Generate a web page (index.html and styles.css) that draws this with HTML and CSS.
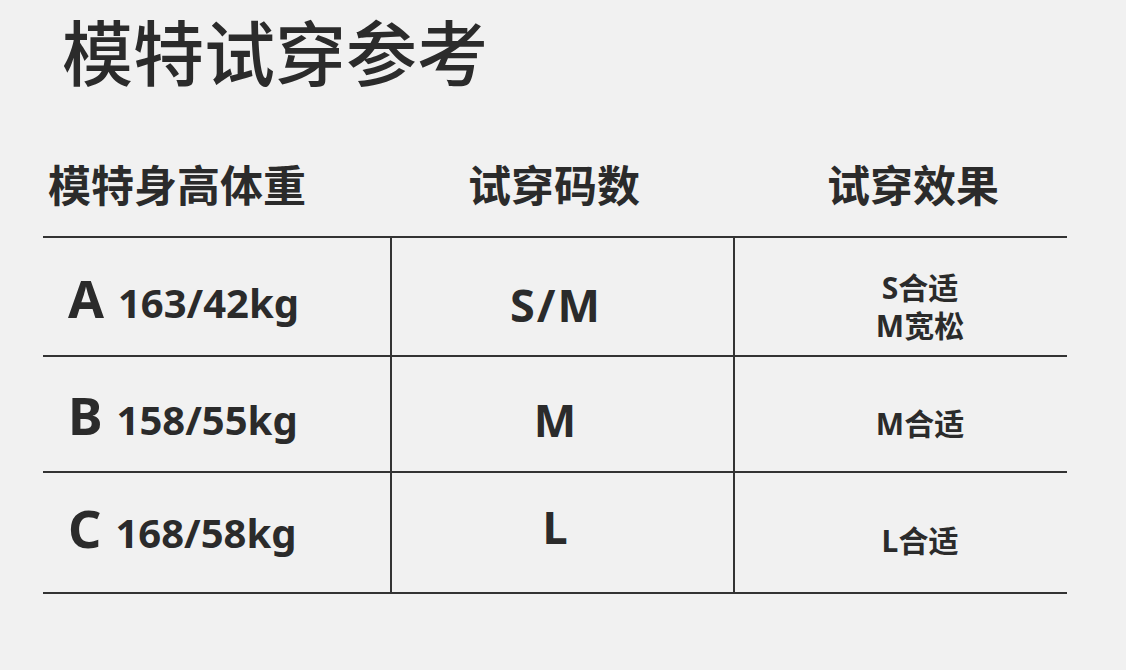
FILE: index.html
```html
<!DOCTYPE html>
<html lang="zh">
<head>
<meta charset="utf-8">
<title>模特试穿参考</title>
<link rel="stylesheet" href="styles.css">
</head>
<body>
<div class="page">
  <h1 class="title">模特试穿参考</h1>
  <div class="head">
    <div class="hcell h1">模特身高体重</div>
    <div class="hcell h2">试穿码数</div>
    <div class="hcell h3">试穿效果</div>
  </div>
  <div class="table">
    <div class="row r1">
      <div class="cell model"><span class="letter">A</span><span class="num">163/42kg</span></div>
      <div class="cell size">S/M</div>
      <div class="cell effect"><span>S合适</span><span>M宽松</span></div>
    </div>
    <div class="row r2">
      <div class="cell model"><span class="letter">B</span><span class="num">158/55kg</span></div>
      <div class="cell size">M</div>
      <div class="cell effect"><span>M合适</span></div>
    </div>
    <div class="row r3">
      <div class="cell model"><span class="letter">C</span><span class="num">168/58kg</span></div>
      <div class="cell size">L</div>
      <div class="cell effect"><span>L合适</span></div>
    </div>
  </div>
</div>
</body>
</html>
```

FILE: styles.css
```css
html, body {
  margin: 0;
  padding: 0;
  background: #f1f1f1;
}
body {
  width: 1126px;
  height: 670px;
  overflow: hidden;
  color: #2b2b2b;
  font-family: "Noto Sans", "Noto Sans CJK SC", sans-serif;
}
.page {
  padding: 0 59px 0 43px;
}
.title {
  margin: 14px 0 0 19px;
  font-family: "Noto Sans CJK SC", sans-serif;
  font-size: 71px;
  line-height: 1;
  font-weight: 500;
}
.head {
  display: grid;
  grid-template-columns: 347px 343px 334px;
  margin-top: 77px;
  height: 74px;
}
.hcell {
  font-family: "Noto Sans CJK SC", sans-serif;
  font-size: 43px;
  line-height: 1;
  font-weight: 700;
}
.h1 { padding-left: 5px; }
.h2 { text-align: center; padding-right: 15px; }
.h3 { text-align: center; padding-left: 26px; }

.table {
  border-top: 2px solid #333;
}
.row {
  display: grid;
  grid-template-columns: 347px 343px 334px;
  border-bottom: 2px solid #333;
}
.r1 { height: 117px; }
.r2 { height: 114px; }
.r3 { height: 119px; }
.cell {
  display: flex;
  font-weight: 700;
}
.cell + .cell {
  border-left: 2px solid #333;
}
.model {
  padding-left: 25px;
  align-items: baseline;
}
.letter {
  font-size: 52px;
  line-height: 1;
  margin-right: 14px;
}
.num {
  font-size: 40px;
  line-height: 1;
}
.r1 .model { padding-top: 34px; }
.r2 .model { padding-top: 32px; }
.r3 .model { padding-top: 29px; }
.size {
  justify-content: center;
  align-items: flex-start;
  padding-right: 13px;
  font-size: 45px;
  letter-spacing: 2px;
  line-height: 1;
}
.r1 .size { padding-top: 44px; }
.r2 .size { padding-top: 40px; }
.r3 .size { padding-top: 31px; }
.effect {
  flex-direction: column;
  justify-content: center;
  align-items: center;
  padding-left: 38px;
  padding-top: 20px;
  font-size: 30px;
  line-height: 38px;
}
.r3 .effect { padding-top: 16px; }
```
